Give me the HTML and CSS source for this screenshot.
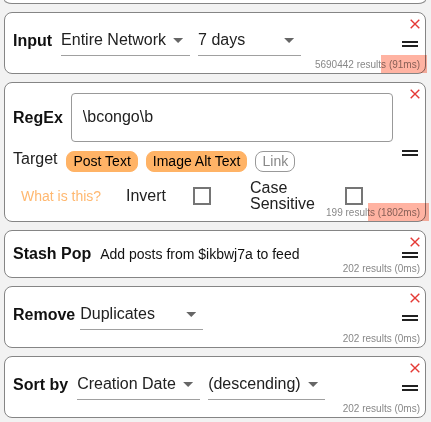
FILE: index.html
```html
<!DOCTYPE html>
<html lang="en">
<head>
<meta charset="utf-8">
<title>Feed steps</title>
<link rel="stylesheet" href="styles.css">
</head>
<body>
<main class="steps">
  <section class="card card-cut"></section>

  <section class="card">
    <div class="content row">
      <h2>Input</h2>
      <div class="fields">
        <span class="pick pick-l"><select aria-label="Source"><option>Entire Network</option></select></span>
        <span class="pick pick-s"><select aria-label="Period"><option>7 days</option></select></span>
      </div>
    </div>
    <button class="close" aria-label="Remove step"><svg viewBox="0 0 10 10"><path d="M.7.7l8.6 8.6M9.3.7L.7 9.3"/></svg></button>
    <span class="handle"></span>
    <p class="results">5690442 results (91ms)<span class="flag"></span></p>
  </section>

  <section class="card">
    <div class="content regex">
      <div class="row regex-line">
        <h2><label for="regex">RegEx</label></h2>
        <input class="text" id="regex" type="text" value="\bcongo\b">
      </div>
      <div class="row targets">
        <span class="target-label">Target</span>
        <div class="chips">
          <button class="chip on">Post Text</button>
          <button class="chip on">Image Alt Text</button>
          <button class="chip">Link</button>
        </div>
      </div>
      <div class="options">
        <a href="#">What is this?</a>
        <label for="invert">Invert</label>
        <input class="tick" id="invert" type="checkbox">
        <label for="case">Case Sensitive</label>
        <input class="tick" id="case" type="checkbox">
      </div>
    </div>
    <button class="close" aria-label="Remove step"><svg viewBox="0 0 10 10"><path d="M.7.7l8.6 8.6M9.3.7L.7 9.3"/></svg></button>
    <span class="handle"></span>
    <p class="results">199 results (1802ms)<span class="flag flag-wide"></span></p>
  </section>

  <section class="card">
    <div class="content stash">
      <h2>Stash Pop</h2>
      <p>Add posts from $ikbwj7a to feed</p>
    </div>
    <button class="close" aria-label="Remove step"><svg viewBox="0 0 10 10"><path d="M.7.7l8.6 8.6M9.3.7L.7 9.3"/></svg></button>
    <span class="handle"></span>
    <p class="results">202 results (0ms)</p>
  </section>

  <section class="card">
    <div class="content row tight">
      <h2>Remove</h2>
      <span class="pick pick-m"><select aria-label="Remove what"><option>Duplicates</option></select></span>
    </div>
    <button class="close" aria-label="Remove step"><svg viewBox="0 0 10 10"><path d="M.7.7l8.6 8.6M9.3.7L.7 9.3"/></svg></button>
    <span class="handle"></span>
    <p class="results">202 results (0ms)</p>
  </section>

  <section class="card">
    <div class="content row">
      <h2>Sort by</h2>
      <div class="fields">
        <span class="pick pick-m"><select aria-label="Sort field"><option>Creation Date</option></select></span>
        <span class="pick pick-o"><select aria-label="Sort order"><option>(descending)</option></select></span>
      </div>
    </div>
    <button class="close" aria-label="Remove step"><svg viewBox="0 0 10 10"><path d="M.7.7l8.6 8.6M9.3.7L.7 9.3"/></svg></button>
    <span class="handle"></span>
    <p class="results">202 results (0ms)</p>
  </section>
</main>
</body>
</html>
```
FILE: styles.css
```css
* { box-sizing: border-box; }

body {
  margin: 0;
  background: #f2f2f2;
  color: #212121;
  font: 16px/18px "Liberation Sans", Arial, sans-serif;
}

h2, p { margin: 0; }
h2 { color: #111; font-size: 16px; line-height: 18px; white-space: nowrap; }
button, input, select { margin: 0; font: inherit; color: inherit; }

.steps {
  display: flex;
  flex-direction: column;
  gap: 8px;
  padding: 0 5px 4px 4px;
}

/* Content on the left, controls on the right, results along the bottom */
.card {
  display: grid;
  grid-template-columns: 1fr 32px;
  grid-template-rows: 20px 1fr 16px;
  background: #fff;
  border: 1px solid #858585;
  border-radius: 8px;
}

.card-cut {
  display: block;
  height: 4px;
  border-top: 0;
  border-radius: 0 0 8px 8px / 0 0 4px 4px;
}

.content { grid-area: 1 / 1 / 4 / 2; padding: 12px 0 17px 8px; }
.row { display: flex; align-items: center; gap: 9px; }
.tight { gap: 5px; }
.fields { display: flex; gap: 8px; }

.pick { position: relative; display: block; height: 31px; }
.pick::after {
  content: "";
  position: absolute;
  top: 13px;
  right: 7px;
  width: 10px;
  height: 5px;
  background: #666;
  clip-path: polygon(0 0, 100% 0, 50% 100%);
  pointer-events: none;
}
.pick select {
  width: 100%;
  height: 100%;
  padding: 0;
  appearance: none;
  background: none;
  border: 0;
  border-bottom: 1px solid #a0a0a0;
  border-radius: 0;
}
.pick-l { width: 129px; }
.pick-m { width: 123px; }
.pick-o { width: 117px; }
.pick-s { width: 103px; }

.close {
  grid-area: 1 / 2;
  place-self: start end;
  display: flex;
  padding: 6px 5px;
  background: none;
  border: 0;
}
.close svg { width: 10px; height: 10px; fill: none; stroke: #e53935; stroke-width: 1.4; }

.handle {
  grid-area: 1 / 2 / 4 / 3;
  place-self: center end;
  width: 16px;
  height: 6px;
  margin: 2px 7px 0 0;
  border: solid #212121;
  border-width: 2px 0;
}

.results {
  grid-area: 3 / 1 / 4 / 3;
  place-self: end;
  position: relative;
  padding: 0 5px 1px 0;
  color: #888;
  font-size: 10px;
  line-height: 14px;
}
.flag {
  position: absolute;
  right: -2px;
  bottom: 0;
  width: 46px;
  height: 18px;
  background: #ffb3a2;
  mix-blend-mode: multiply;
}
.flag-wide { right: -4px; width: 61px; }

.regex { display: flex; flex-direction: column; gap: 8px; padding: 10px 0 9px 8px; }
.regex-line { gap: 8px; }
.text {
  flex: 1;
  min-width: 0;
  height: 49px;
  padding: 0 11px 2px;
  background: #fff;
  border: 1px solid #999;
  border-radius: 4px;
}

.target-label { margin-bottom: 4px; }
.chips { display: flex; gap: 8px; }
.chip {
  height: 21px;
  padding: 0 6px;
  background: #fff;
  border: 1px solid #999;
  border-radius: 8px;
  color: #888;
  font-size: 14px;
  line-height: 18px;
}
.chip.on { background: #ffb366; border-color: #ffb366; color: #000; }

.options {
  display: grid;
  grid-template-columns: 105px 67px 57px 95px 18px;
  align-items: center;
  padding-left: 8px;
  line-height: 16px;
}
.options a { color: #ffb870; font-size: 14px; text-decoration: none; }
.options label { max-width: 80px; }
.tick {
  width: 18px;
  height: 18px;
  appearance: none;
  background: #fff;
  border: 2px solid #757575;
}

.stash { display: flex; align-items: center; gap: 9px; padding: 14px 0 14px 8px; }
.stash p { color: #111; font-size: 14px; }
```
